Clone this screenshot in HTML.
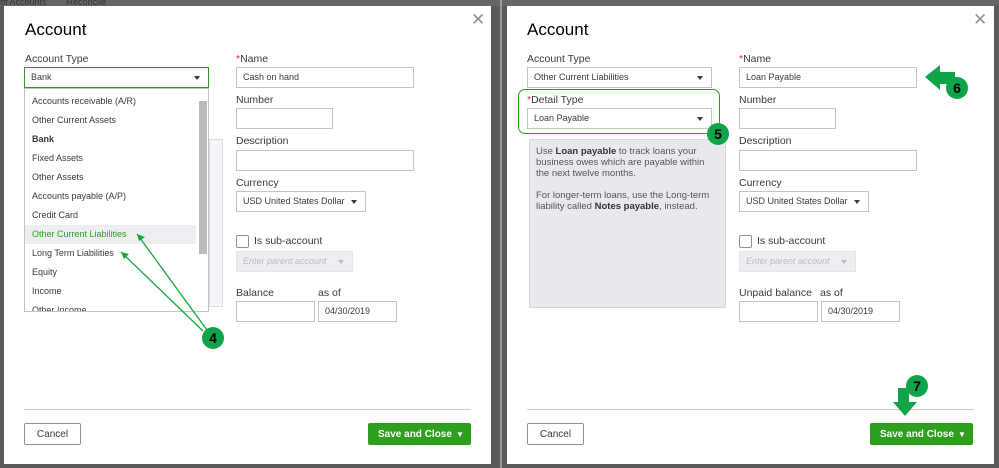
<!DOCTYPE html>
<html><head><meta charset="utf-8"><style>
*{margin:0;padding:0;box-sizing:border-box}
body{width:999px;height:468px;overflow:hidden;background:#5a5a5a;font-family:"Liberation Sans",sans-serif;position:relative;color:#393a3d}
.a{position:absolute}
.dlg{position:absolute;top:6px;height:458px;background:#fff}
.t{position:absolute;font-size:17px;color:#000}
.l{position:absolute;font-size:10.5px;color:#393a3d}
.in{position:absolute;border:1px solid #c4c4c4;background:#fff;font-size:9px;color:#393a3d;padding-left:6px;line-height:19px}
.car{position:absolute;right:8px;top:8px;width:0;height:0;border-left:3px solid transparent;border-right:3px solid transparent;border-top:4px solid #393a3d}
.req{color:#e0301e}
.btn{position:absolute;border:1px solid #8d9096;border-radius:2px;font-size:10px;text-align:center;line-height:21px;background:#fff}
.save{position:absolute;background:#2ca01c;color:#fff;font-size:10px;font-weight:bold;border-radius:2px;line-height:23px}
.x{position:absolute;font-size:17px;color:#8d9096;font-weight:300}
.dd div{height:19px;line-height:19px;padding-left:7px;font-size:9px}
</style></head><body>
<div class="a" style="left:0;top:0;width:999px;height:6px;background:#666"></div>
<div class="a" style="left:0;top:-3px;font-size:9px;color:#333">of Accounts&nbsp;&nbsp;&nbsp;&nbsp;&nbsp;&nbsp;&nbsp;&nbsp;Reconcile</div>
<div class="a" style="left:500px;top:0;width:2px;height:468px;background:#999"></div>

<!-- LEFT -->
<div class="dlg" style="left:4px;width:487px"></div>
<div class="x" style="left:471px;top:10px">✕</div>
<div class="t" style="left:25px;top:20px">Account</div>
<div class="l" style="left:25px;top:53px">Account Type</div>
<div class="in" style="left:24px;top:67px;width:185px;height:21px;border-color:#2ca01c">Bank<span class="car"></span></div>
<div class="a" style="left:209px;top:139px;width:14px;height:168px;border:1px solid #ddd;background:#f4f5f8"></div>
<div class="a dd" style="left:24px;top:88px;width:185px;height:224px;border:1px solid #c4c4c4;background:#fff;overflow:hidden">
<div style="margin-top:3px">Accounts receivable (A/R)</div><div>Other Current Assets</div><div style="font-weight:bold">Bank</div><div>Fixed Assets</div><div>Other Assets</div><div>Accounts payable (A/P)</div><div>Credit Card</div><div style="background:#eceef1;color:#2ca01c;margin-right:12px">Other Current Liabilities</div><div>Long Term Liabilities</div><div>Equity</div><div>Income</div><div>Other Income</div>
<div class="a" style="right:1px;top:12px;width:8px;height:153px;background:#bbb"></div>
</div>
<div class="l" style="left:236px;top:53px"><span class="req">*</span>Name</div>
<div class="in" style="left:236px;top:67px;width:178px;height:21px">Cash on hand</div>
<div class="l" style="left:236px;top:94px">Number</div>
<div class="in" style="left:236px;top:108px;width:97px;height:21px"></div>
<div class="l" style="left:236px;top:135px">Description</div>
<div class="in" style="left:236px;top:150px;width:178px;height:21px"></div>
<div class="l" style="left:236px;top:177px">Currency</div>
<div class="in" style="left:236px;top:191px;width:130px;height:21px">USD United States Dollar<span class="car"></span></div>
<div class="a" style="left:236px;top:235px;width:13px;height:13px;border:1px solid #8d9096;border-radius:2px"></div>
<div class="l" style="left:254px;top:235px">Is sub-account</div>
<div class="in" style="left:236px;top:251px;width:117px;height:21px;background:#eceef1;border-color:#e3e5e8;color:#bbb;font-style:italic">Enter parent account<span class="car" style="border-top-color:#bbb"></span></div>
<div class="l" style="left:236px;top:287px">Balance</div>
<div class="l" style="left:318px;top:287px">as of</div>
<div class="in" style="left:236px;top:301px;width:79px;height:21px"></div>
<div class="in" style="left:318px;top:301px;width:79px;height:21px">04/30/2019</div>
<div class="a" style="left:24px;top:409px;width:447px;height:1px;background:#ccc"></div>
<div class="btn" style="left:24px;top:423px;width:57px;height:22px">Cancel</div>
<div class="save" style="left:368px;top:423px;width:103px;height:22px"><span style="padding-left:10px">Save and Close</span><span style="position:absolute;left:88px;top:0;font-size:8px">▼</span></div>

<!-- RIGHT -->
<div class="dlg" style="left:507px;width:487px"></div>
<div class="x" style="left:973px;top:10px">✕</div>
<div class="t" style="left:527px;top:20px">Account</div>
<div class="l" style="left:527px;top:53px">Account Type</div>
<div class="in" style="left:527px;top:67px;width:185px;height:21px">Other Current Liabilities<span class="car"></span></div>
<div class="a" style="left:518px;top:89px;width:202px;height:45px;border:1.5px solid #2ca01c;border-radius:7px"></div>
<div class="l" style="left:527px;top:94px"><span class="req">*</span>Detail Type</div>
<div class="in" style="left:527px;top:108px;width:185px;height:21px">Loan Payable<span class="car"></span></div>
<div class="a" style="left:529px;top:139px;width:197px;height:169px;background:#e8e9ec;border:1px solid #d4d7dc;font-size:9.5px;line-height:11px;padding:6px 12px 0 6px;color:#555">Use <b style="color:#333">Loan payable</b> to track loans your business owes which are payable within the next twelve months.<br><br>For longer-term loans, use the Long-term liability called <b style="color:#333">Notes payable</b>, instead.</div>
<div class="l" style="left:739px;top:53px"><span class="req">*</span>Name</div>
<div class="in" style="left:739px;top:67px;width:178px;height:21px">Loan Payable</div>
<div class="l" style="left:739px;top:94px">Number</div>
<div class="in" style="left:739px;top:108px;width:97px;height:21px"></div>
<div class="l" style="left:739px;top:135px">Description</div>
<div class="in" style="left:739px;top:150px;width:178px;height:21px"></div>
<div class="l" style="left:739px;top:177px">Currency</div>
<div class="in" style="left:739px;top:191px;width:130px;height:21px">USD United States Dollar<span class="car"></span></div>
<div class="a" style="left:739px;top:235px;width:13px;height:13px;border:1px solid #8d9096;border-radius:2px"></div>
<div class="l" style="left:757px;top:235px">Is sub-account</div>
<div class="in" style="left:739px;top:251px;width:117px;height:21px;background:#eceef1;border-color:#e3e5e8;color:#bbb;font-style:italic">Enter parent account<span class="car" style="border-top-color:#bbb"></span></div>
<div class="l" style="left:739px;top:287px">Unpaid balance</div>
<div class="l" style="left:820px;top:287px">as of</div>
<div class="in" style="left:739px;top:301px;width:79px;height:21px"></div>
<div class="in" style="left:821px;top:301px;width:79px;height:21px">04/30/2019</div>
<div class="a" style="left:527px;top:409px;width:447px;height:1px;background:#ccc"></div>
<div class="btn" style="left:527px;top:423px;width:57px;height:22px">Cancel</div>
<div class="save" style="left:870px;top:423px;width:103px;height:22px"><span style="padding-left:10px">Save and Close</span><span style="position:absolute;left:88px;top:0;font-size:8px">▼</span></div>

<svg class="a" style="left:0;top:0" width="999" height="468">
<g stroke="#14a83a" stroke-width="1.3" fill="none">
<line x1="207" y1="330" x2="137" y2="234"/><line x1="203" y1="331" x2="121" y2="252"/>
</g>
<polygon points="137,234 145,237 139,241" fill="#14a83a"/>
<polygon points="121,252 129,254 124,259" fill="#14a83a"/>
<g fill="#0fa34a">
<ellipse cx="213" cy="338" rx="11" ry="11"/>
<ellipse cx="718" cy="134" rx="11" ry="11"/>
<polygon points="925,77 940,65 940,72 955,72 955,84 940,84 940,90"/>
<ellipse cx="957" cy="88" rx="11" ry="11"/>
<polygon points="898,388 909,388 909,402 917,402 905,416 893,402 898,402"/>
<ellipse cx="917" cy="386" rx="11" ry="11"/>
</g>
<g font-family="Liberation Sans,sans-serif" font-weight="bold" font-size="14" text-anchor="middle" fill="#000">
<text x="213" y="343">4</text><text x="718" y="139">5</text><text x="957" y="93">6</text><text x="917" y="391">7</text>
</g>
</svg>
</body></html>
